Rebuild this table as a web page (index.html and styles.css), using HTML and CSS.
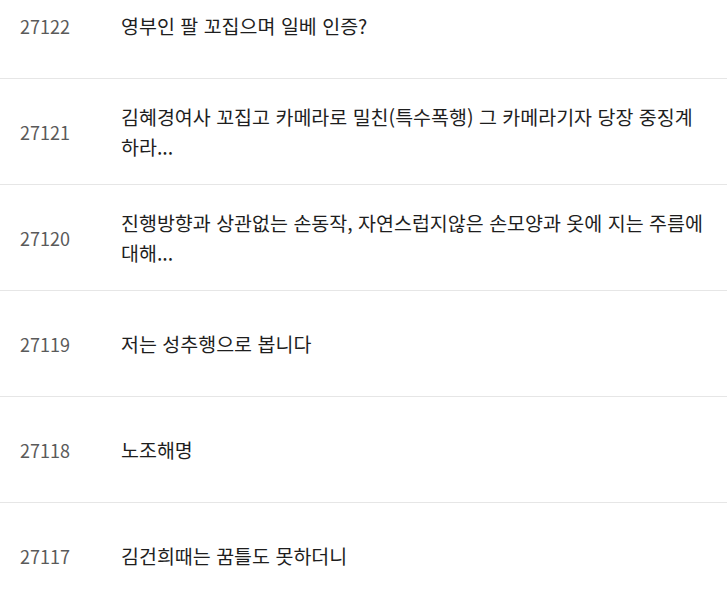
FILE: index.html
```html
<!DOCTYPE html>
<html lang="ko">
<head>
<meta charset="utf-8">
<link rel="stylesheet" href="styles.css">
</head>
<body>
<ul class="list">
  <li class="row"><span class="num">27122</span><span class="title">영부인 팔 꼬집으며 일베 인증?</span></li>
  <li class="row"><span class="num">27121</span><span class="title">김혜경여사 꼬집고 카메라로 밀친(특수폭행) 그 카메라기자 당장 중징계하라...</span></li>
  <li class="row"><span class="num">27120</span><span class="title">진행방향과 상관없는 손동작, 자연스럽지않은 손모양과 옷에 지는 주름에 대해...</span></li>
  <li class="row"><span class="num">27119</span><span class="title">저는 성추행으로 봅니다</span></li>
  <li class="row"><span class="num">27118</span><span class="title">노조해명</span></li>
  <li class="row"><span class="num">27117</span><span class="title">김건희때는 꿈틀도 못하더니</span></li>
</ul>
</body>
</html>
```
FILE: styles.css
```css
html, body {
  margin: 0;
  padding: 0;
  background: #fff;
}
body {
  font-family: "Noto Sans CJK KR", "Noto Sans", sans-serif;
  overflow: hidden;
}
.list {
  list-style: none;
  margin: -27px 0 0 0;
  padding: 0;
}
.row {
  display: flex;
  align-items: center;
  height: 105px;
  border-bottom: 1px solid #e6e6e6;
  padding: 0 20px;
}
.num {
  flex: 0 0 101px;
  font-size: 18px;
  color: #5a5a5a;
}
.title {
  flex: 1;
  font-size: 19.5px;
  line-height: 30px;
  color: #1e1e1e;
  padding-right: 0;
}
```
